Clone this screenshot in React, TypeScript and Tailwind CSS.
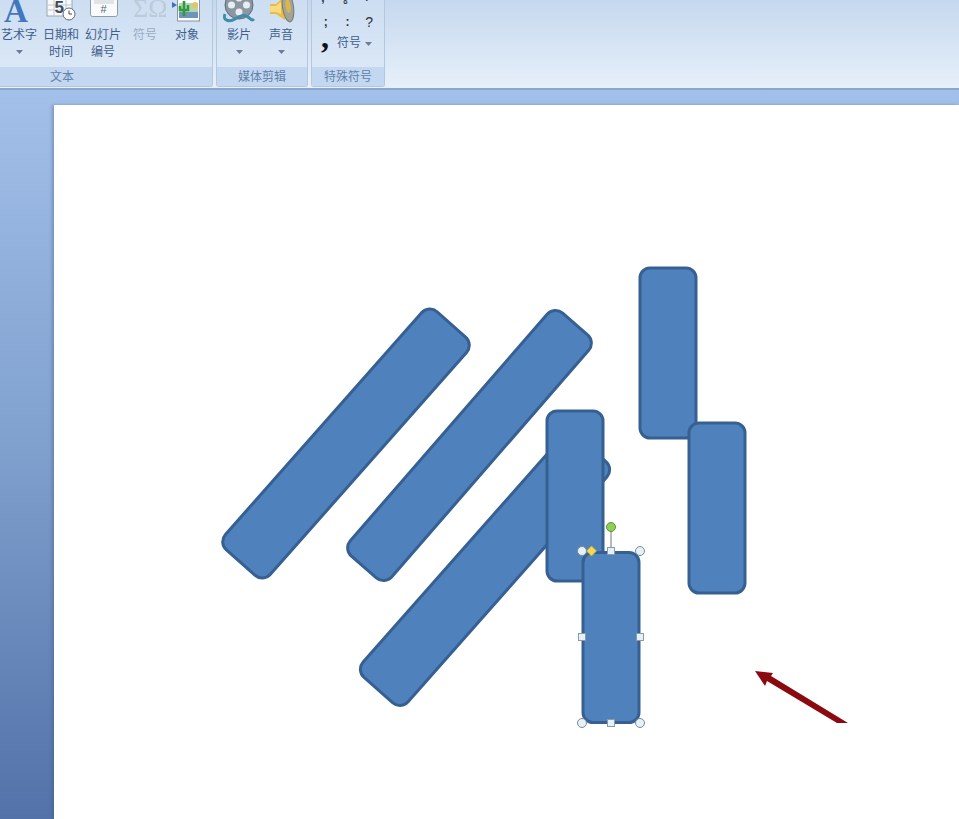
const cjk = "font-['Liberation_Sans','Noto_Sans_CJK_SC',sans-serif]"

const Caret = () => (
    <svg width="7" height="4" viewBox="0 0 7 4" className="mx-auto">
        <path d="M0 0h7L3.5 4z" fill="#6b7d98" />
    </svg>
)

const WordArtIcon = () => (
    <svg width="42" height="26" viewBox="0 0 42 26">
        <text x="6" y="21.5" fontFamily="Liberation Serif" fontWeight="700" fontSize="33" fill="#4177bd">A</text>
    </svg>
)

const DateIcon = () => (
    <svg width="42" height="26" viewBox="0 0 42 26">
        <rect x="7" y="-3" width="25" height="19" fill="#f7f9fb" stroke="#9aa6b4" />
        <path d="M7 5h25M7 10h25M14 -3v19M26 -3v19" stroke="#c3cad3" />
        <text x="14.5" y="12.5" fontFamily="Liberation Sans" fontWeight="700" fontSize="17" fill="#404a58">5</text>
        <circle cx="29" cy="14" r="6" fill="#fff" stroke="#5f6b7b" />
        <path d="M29 10.5v3.5h3" fill="none" stroke="#3f4a5a" />
    </svg>
)

const SlideNumberIcon = () => (
    <svg width="42" height="26" viewBox="0 0 42 26">
        <rect x="8.5" y="-3" width="27" height="19.5" rx="2" fill="#f8fafc" stroke="#8d9bab" />
        <path d="M12 1h20M12 3h20" stroke="#c7ced6" />
        <text x="18.5" y="13" fontFamily="Liberation Sans" fontSize="11" fill="#55657b">#</text>
    </svg>
)

const SymbolIcon = () => (
    <svg width="42" height="26" viewBox="0 0 42 26">
        <text x="9" y="17" fontFamily="Liberation Serif" fontSize="26" fill="#bccadb">ΣΩ</text>
    </svg>
)

const ObjectIcon = () => (
    <svg width="42" height="26" viewBox="0 0 42 26">
        <path d="M6 2l5 3-5 3z" fill="#3a6fc0" />
        <rect x="11.5" y="-3" width="22" height="24" fill="#fbfcfd" stroke="#8894a3" />
        <rect x="13" y="3" width="19" height="10" fill="#b5d6ad" />
        <rect x="13" y="12" width="19" height="6" fill="#6f94b8" />
        <path d="M18 1v15M14 6v4h8V5" fill="none" stroke="#2f9a3e" strokeWidth="2.6" />
        <circle cx="29" cy="5" r="3" fill="#e3c46a" />
    </svg>
)

const MovieIcon = () => (
    <svg width="42" height="26" viewBox="0 0 42 26">
        <circle cx="21" cy="5" r="14" fill="#8b97a3" stroke="#5e6a76" />
        <circle cx="21" cy="-2" r="3.5" fill="#e8edf2" />
        <circle cx="13.5" cy="5" r="3.5" fill="#e8edf2" />
        <circle cx="28.5" cy="5" r="3.5" fill="#e8edf2" />
        <circle cx="21" cy="12" r="3.5" fill="#e8edf2" />
        <path d="M7 14c-3 7 5 8 10 5s9-5 13-2 4 4 6 2" fill="none" stroke="#3f8da8" strokeWidth="3" />
    </svg>
)

const SoundIcon = () => (
    <svg width="42" height="26" viewBox="0 0 42 26">
        <path d="M10 4h6l9-8v24l-9-6h-6z" fill="#e9bd45" />
        <path d="M10 6h6l5-4v12l-5-2h-6z" fill="#f6dc80" />
        <ellipse cx="28" cy="7" rx="5.5" ry="15" fill="#a3a498" stroke="#77786f" transform="rotate(-8 28 7)" />
        <ellipse cx="28" cy="6" rx="2.5" ry="7" fill="#d9b64e" transform="rotate(-8 28 6)" />
    </svg>
)

const RibbonButton = ({
    icon,
    lines,
    caret,
    muted,
}: {
    icon: React.ReactNode
    lines: string[]
    caret?: boolean
    muted?: boolean
}) => (
    <div className={`flex w-[42px] flex-col items-center ${muted ? "text-[#9aabbf]" : "text-[#3f5f8c]"}`}>
        <div className="h-[27px] overflow-hidden">{icon}</div>
        {lines.map((line) => (
            <div key={line} className="h-[17px] whitespace-nowrap text-[12px] leading-[17px]">
                {line}
            </div>
        ))}
        {caret && (
            <div className="flex h-[16px] items-center">
                <Caret />
            </div>
        )}
    </div>
)

const RibbonGroup = ({
    label,
    className,
    labelClass = "text-center",
    children,
}: {
    label: string
    className: string
    labelClass?: string
    children: React.ReactNode
}) => (
    <section
        className={`flex h-[87px] shrink-0 flex-col overflow-hidden rounded-b-[3px] border border-t-0 border-[#b4c7dc] bg-gradient-to-b from-[#cddef2] to-[#deeaf7] ${className}`}
    >
        <div className="h-[67px] shrink-0">{children}</div>
        <div className={`h-[19px] shrink-0 bg-[#c3d8f0] pt-[1px] text-[12px] leading-[18px] text-[#5f81aa] ${labelClass}`}>{label}</div>
    </section>
)

const Canvas = () => {
    const bar = "#4f81bd"
    const edge = "#376092"
    const corners: [number, number][] = [
        [582, 551],
        [640, 551],
        [582, 723],
        [640, 723],
    ]
    const mids: [number, number][] = [
        [611, 551],
        [582, 637],
        [640, 637],
        [611, 723],
    ]
    const Tilted = ({ cx, cy, w, len, deg }: { cx: number; cy: number; w: number; len: number; deg: number }) => (
        <rect
            x={cx - w / 2}
            y={cy - len / 2}
            width={w}
            height={len}
            rx="11"
            fill={bar}
            stroke={edge}
            strokeWidth="3"
            transform={`rotate(${deg} ${cx} ${cy})`}
        />
    )
    const Upright = ({ x, y }: { x: number; y: number }) => (
        <rect x={x} y={y} width="56" height="170" rx="10" fill={bar} stroke={edge} strokeWidth="3" />
    )

    return (
        <svg width="905" height="714" viewBox="54 105 905 714" className="block">
            <Tilted cx={346} cy={443.5} w={60} len={318} deg={41.5} />
            <Tilted cx={469.5} cy={445.5} w={55} len={322} deg={41} />
            <Tilted cx={485} cy={569.5} w={60} len={322} deg={41.5} />
            <Upright x={640} y={268} />
            <Upright x={689} y={423} />
            <Upright x={547} y={411} />
            <Upright x={583} y={552.5} />
            <path d="M611 531v20" stroke="#6b7785" />
            <circle cx="611" cy="527" r="4.5" fill="#8fd14f" stroke="#5f8f3e" />
            <path d="M591.5 546l5 5-5 5-5-5z" fill="#f5d94e" stroke="#c7ad40" strokeWidth="0.75" />
            {corners.map(([x, y]) => (
                <circle key={`${x}-${y}`} cx={x} cy={y} r="4.5" fill="#e4f1f6" stroke="#7d8894" />
            ))}
            {mids.map(([x, y]) => (
                <rect key={`${x}-${y}`} x={x - 3.5} y={y - 3.5} width="7" height="7" fill="#e4f1f6" stroke="#8d99a5" />
            ))}
            <path d="M755 671l18 2-2 3 77 47h-11l-70-42-2 5z" fill="#8a0a0f" />
        </svg>
    )
}

export default function App() {
    return (
        <div className={`flex h-[819px] w-[959px] flex-col overflow-hidden bg-white ${cjk}`}>
            <header className="flex h-[88px] shrink-0 gap-[3px] bg-gradient-to-b from-[#c6d8ee] to-[#e6f0fa]">
                <RibbonGroup label="文本" className="-ml-[5px] w-[218px] pl-[2px]" labelClass="pl-[52px]">
                    <div className="flex">
                        <RibbonButton icon={<WordArtIcon />} lines={["艺术字"]} caret />
                        <RibbonButton icon={<DateIcon />} lines={["日期和", "时间"]} />
                        <RibbonButton icon={<SlideNumberIcon />} lines={["幻灯片", "编号"]} />
                        <RibbonButton icon={<SymbolIcon />} lines={["符号"]} muted />
                        <RibbonButton icon={<ObjectIcon />} lines={["对象"]} />
                    </div>
                </RibbonGroup>
                <RibbonGroup label="媒体剪辑" className="w-[92px]">
                    <div className="flex pl-[1px]">
                        <RibbonButton icon={<MovieIcon />} lines={["影片"]} caret />
                        <RibbonButton icon={<SoundIcon />} lines={["声音"]} caret />
                    </div>
                </RibbonGroup>
                <RibbonGroup label="特殊符号" className="w-[74px]">
                    <div className="grid grid-cols-3 pl-[3px] pr-[4px] text-center font-['Liberation_Sans'] text-[12px] font-bold leading-[17px] text-[#2b3340]">
                        <div className="-mt-[3px] h-[14px] pr-[6px]">’</div>
                        <div className="-mt-[3px] h-[14px] pr-[4px]">°</div>
                        <div className="-mt-[3px] h-[14px] pr-[6px]">`</div>
                        <div className="mt-[3px]">;</div>
                        <div className="mt-[3px]">:</div>
                        <div className="mt-[3px] text-[14px] font-normal">?</div>
                    </div>
                    <div className="mt-[4px] flex h-[17px] items-center pl-[9px] text-[12px] leading-[17px] text-[#3f5f8c]">
                        <span className="h-[17px] w-[16px] font-['Liberation_Serif'] text-[32px] font-bold leading-[4px] text-[#111]">,</span>
                        <span>符号</span>
                        <span className="ml-[4px] flex">
                            <Caret />
                        </span>
                    </div>
                </RibbonGroup>
            </header>
            <main className="flex flex-1 flex-col border-t-2 border-[#8ba8cc] bg-gradient-to-b from-[#a2c0e9] via-[#7f9fcd] to-[#5272a9] pl-[54px] pt-[15px]">
                <div className="flex-1 bg-white shadow-[-2px_0_3px_rgba(60,80,120,0.35)]">
                    <Canvas />
                </div>
            </main>
        </div>
    )
}
